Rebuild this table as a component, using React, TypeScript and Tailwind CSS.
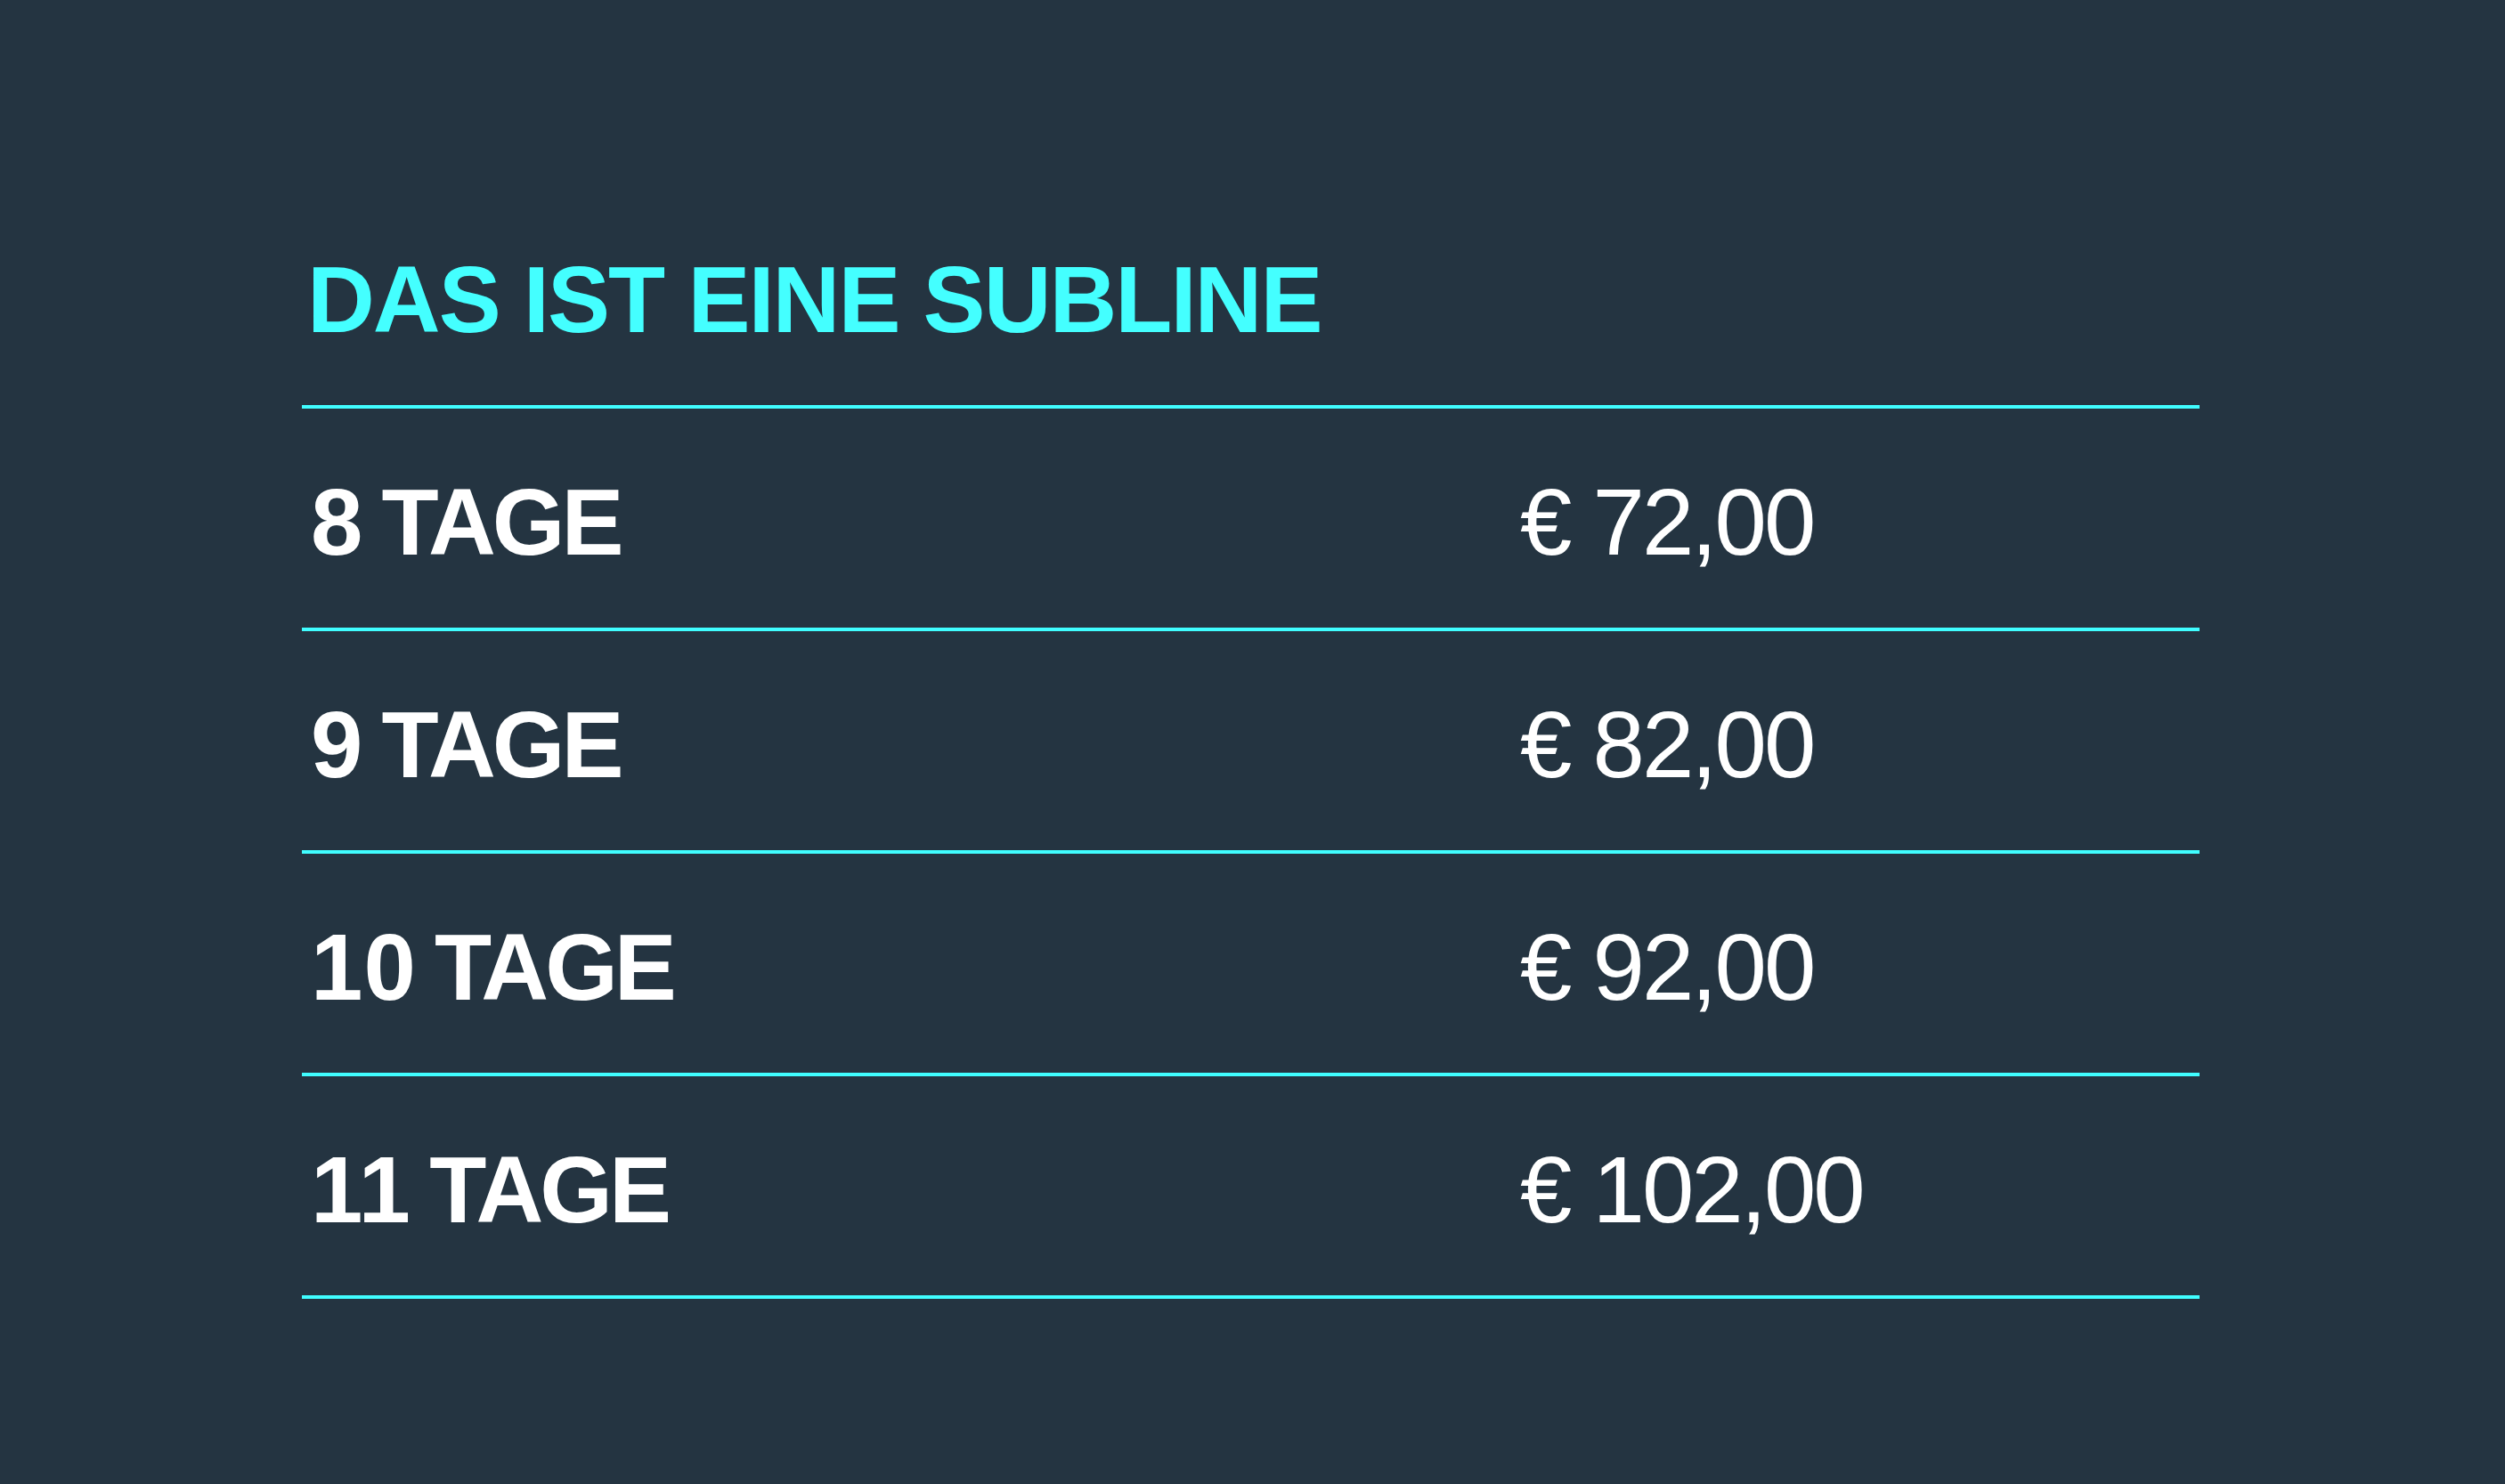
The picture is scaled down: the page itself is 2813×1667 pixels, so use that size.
const rows = [
  { n: '8', price: '€ 72,00' },
  { n: '9', price: '€ 82,00' },
  { n: '10', price: '€ 92,00' },
  { n: '11', price: '€ 102,00' },
]

export default function App() {
  return (
    <div className="min-h-screen bg-[#243441] pl-[339px] pt-[209px] font-['Liberation_Sans',Arial,sans-serif]">
      <div className="w-[2131px]">
        <div className="flex h-[250px] items-center border-b-4 border-[#40fdff] pl-[6px] pt-2">
          <h2 className="text-[105px] font-bold leading-none tracking-[-2px] text-[#44ffff]">DAS IST EINE SUBLINE</h2>
        </div>
        {rows.map((r) => (
          <div key={r.n} className="flex h-[250px] items-center border-b-4 border-[#40fdff] pl-[10px] pt-2 text-[105px] leading-none text-white">
            <span className="w-[1358px] font-bold [word-spacing:-9px]">
              <span className="tracking-[1px]">{r.n}</span> <span className="tracking-[-4px]">TAGE</span>
            </span>
            <span className="tracking-[-3px]">{r.price}</span>
          </div>
        ))}
      </div>
    </div>
  )
}
